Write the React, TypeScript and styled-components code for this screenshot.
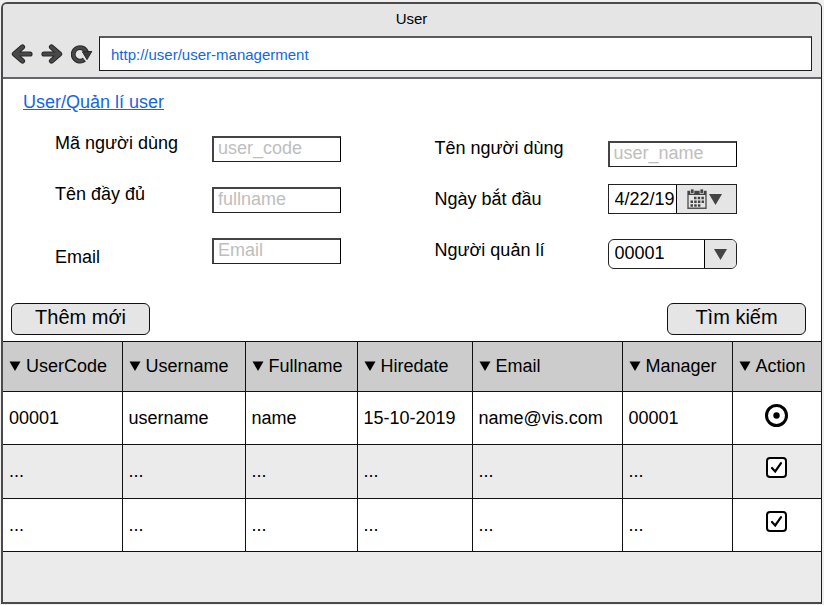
import React from "react";
import styled, { createGlobalStyle, css } from "styled-components";

const GlobalStyle = createGlobalStyle`
  *, *::before, *::after { box-sizing: border-box; }
  body {
    margin: 0;
    background: #efefef;
    color: #000;
    font-family: "Liberation Sans", Arial, sans-serif;
    font-size: 18px;
    line-height: 22px;
  }
  input, button, select { font: inherit; color: inherit; margin: 0; }
`;

const Page = styled.div`
  min-height: 100vh;
  display: flex;
  padding: 2px 2px 1px 1px;
`;

const BrowserWindow = styled.div`
  flex: 1;
  min-width: 0;
  display: flex;
  flex-direction: column;
  border: 2px solid #4a4a4c;
  border-right: 1px solid #1c1c1e;
  border-radius: 6px 6px 0 0;
  background: #ebebeb;
  overflow: hidden;
`;

const Chrome = styled.header`
  background: #e5e5e5;
  border-bottom: 2px solid #66666a;
  padding: 4px 9px 6px 8px;
`;

const Title = styled.div`
  font-size: 15px;
  text-align: center;
`;

const Toolbar = styled.div`
  display: flex;
  align-items: center;
  gap: 6px;
  margin-top: 6px;
`;

const NavGroup = styled.nav`
  display: flex;
  gap: 8px;
`;

const NavButton = styled.button`
  display: flex;
  padding: 0;
  border: 0;
  background: none;
`;

const Address = styled.input`
  flex: 1;
  min-width: 0;
  height: 35px;
  padding: 0 11px;
  border: 1px solid #1c1c1e;
  border-top: 2px solid #5a5a5c;
  outline: 0;
  background: #fff;
  color: #1267e0;
  font-size: 15px;
`;

const Content = styled.main`
  background: #fff;
`;

const Crumb = styled.a`
  display: inline-block;
  margin: 12px 0 0 20px;
  color: #1267e0;
  text-decoration: underline;
`;

const Form = styled.form`
  display: grid;
  grid-template-columns: 380fr 387fr;
  padding: 19px 0 34px 52px;
`;

const Column = styled.div<{ $lowered?: boolean }>`
  display: grid;
  grid-auto-rows: 34px;
  row-gap: 17px;
  padding-top: ${(p) => (p.$lowered ? "1px" : "0")};
`;

const Field = styled.div<{ $labelWidth: number; $align: string }>`
  display: grid;
  grid-template-columns: ${(p) => p.$labelWidth}px 129px;
  align-items: ${(p) => p.$align};
`;

const Label = styled.label<{ $place?: "start" | "center" | "end" }>`
  align-self: ${(p) => p.$place ?? "start"};
  line-height: 22px;
`;

const LoweredLabel = styled(Label)`
  padding-top: 4px;
`;

const TextInput = styled.input`
  width: 100%;
  height: 26px;
  padding: 0 4px 2px;
  border: 1px solid #222;
  border-width: 2px 1px 1px 2px;
  border-color: #444 #000 #222 #444;
  background: #fff;
  outline: 0;
  &::placeholder { color: #bebebe; opacity: 1; }
`;

const Picker = styled.div<{ $rounded?: boolean }>`
  display: flex;
  height: 30px;
  border: 1px solid #222;
  overflow: hidden;
  background: #fff;
  ${(p) =>
    p.$rounded &&
    css`
      display: grid;
      grid-template-columns: 1fr 32px;
      border-radius: 6px;
    `}
`;

const DateInput = styled.input`
  width: 67px;
  padding: 0 0 0 6px;
  border: 0;
  outline: 0;
  background: none;
`;

const DateButton = styled.button`
  flex: 1;
  display: flex;
  align-items: center;
  justify-content: center;
  gap: 2px;
  padding: 0 3px 0 0;
  border: 0;
  border-left: 1px solid #000;
  background: #e5e5e5;
`;

const Select = styled.select`
  appearance: none;
  grid-area: 1 / 1 / 2 / 3;
  width: 100%;
  padding: 0 36px 2px 6px;
  border: 0;
  outline: 0;
  background: transparent;
`;

const SelectArrow = styled.span`
  grid-area: 1 / 2;
  display: flex;
  align-items: center;
  justify-content: center;
  border-left: 1px solid #000;
  background: #e5e5e5;
  pointer-events: none;
`;

const Actions = styled.div`
  display: flex;
  justify-content: space-between;
  padding: 0 15px 6px 8px;
`;

const ActionButton = styled.button`
  width: 139px;
  height: 32px;
  padding: 0 0 4px;
  border: 1px solid #111;
  border-radius: 6px;
  background: #e5e5e5;
  font-size: 20px;
`;

const Table = styled.table`
  width: 100%;
  table-layout: fixed;
  border-collapse: collapse;
  th, td { border: 1px solid #111; text-align: left; }
  tr > :first-child { border-left-width: 0; }
  tr > :last-child { border-right-width: 0; }
`;

const Col = styled.col<{ $w: number }>`
  width: ${(p) => p.$w}px;
`;

const HeadCell = styled.th`
  height: 50px;
  padding: 0 6px 2px;
  background: #cccccc;
  font-weight: 400;
`;

const SortButton = styled.button`
  display: flex;
  align-items: center;
  gap: 5px;
  padding: 0;
  border: 0;
  background: none;
`;

const Row = styled.tr<{ $shaded?: boolean }>`
  height: ${(p) => (p.$shaded ? 54 : 53)}px;
  background: ${(p) => (p.$shaded ? "#ebebeb" : "#fff")};
`;

const Cell = styled.td`
  padding: 0 6px 1px;
`;

const ActionCell = styled.td`
  padding: 12px 0 0;
  vertical-align: top;
`;

const Toggle = styled.span`
  display: grid;
  justify-content: center;
  > * { grid-area: 1 / 1; }
  svg { pointer-events: none; place-self: center; }
`;

const Mark = styled.input<{ $round?: boolean }>`
  appearance: none;
  width: ${(p) => (p.$round ? 23 : 21)}px;
  height: ${(p) => (p.$round ? 23 : 21)}px;
  border: ${(p) => (p.$round ? 3 : 2)}px solid #000;
  border-radius: ${(p) => (p.$round ? "50%" : "4px")};
  background: #fff;
  & + svg { visibility: hidden; }
  &:checked + svg { visibility: visible; }
`;

const Triangle = ({ large }: { large?: boolean }) => (
  <svg width={large ? 13 : 12} height={large ? 11 : 10} viewBox="0 0 12 10" aria-hidden="true">
    <path d={large ? "M0 0H12L6 10Z" : "M.5 .5H11.5L6 10Z"} fill={large ? "#444" : "#000"} />
  </svg>
);

const ArrowIcon = ({ forward }: { forward?: boolean }) => (
  <svg width="22" height="20" viewBox="0 0 22 20" aria-hidden="true">
    <g
      transform={forward ? "matrix(-1 0 0 1 22 0)" : undefined}
      fill="none"
      strokeLinecap="round"
      strokeLinejoin="round"
    >
      <path d="M11.5 3L3.4 10L11.5 17M4 10H19" stroke="#2a2a2a" strokeWidth="5.2" />
      <path d="M11.5 3L3.4 10L11.5 17M4 10H19" stroke="#484848" strokeWidth="3.2" />
    </g>
  </svg>
);

const ReloadIcon = () => (
  <svg width="22" height="20" viewBox="0 0 22 20" aria-hidden="true">
    <path d="M13.4 15.6A6.8 6.8 0 1 1 15.6 8.6" fill="none" stroke="#2a2a2a" strokeWidth="4.8" />
    <path d="M13 15.9A6.8 6.8 0 1 1 15.6 8.6" fill="none" stroke="#484848" strokeWidth="2.8" />
    <path d="M11.4 7.8L20.8 7.4L16 15.6Z" fill="#3a3a3a" stroke="#2a2a2a" strokeLinejoin="round" />
  </svg>
);

const CalendarIcon = () => (
  <svg width="20" height="20" viewBox="0 0 20 20" aria-hidden="true">
    <path d="M1 2.5H19V19.3H1Z" fill="#e5e5e5" stroke="#555" strokeWidth="1.4" />
    <path d="M1 2H19V6H1Z" fill="#444" />
    <path d="M3.5 0H7V4.5H3.5ZM13 0H16.5V4.5H13Z" fill="#444" stroke="#e5e5e5" strokeWidth=".7" />
    <path d="M7 9H17M3.5 12.7H17M3.5 16.4H13.5" stroke="#444" strokeWidth="2.5" strokeDasharray="2.5 1.2" />
  </svg>
);

const CheckIcon = () => (
  <svg width="13" height="13" viewBox="0 0 13 13" aria-hidden="true">
    <path d="M2 7L5.2 10.4L11 2.2" fill="none" stroke="#000" strokeWidth="2.2" strokeLinecap="round" />
  </svg>
);

const DotIcon = () => (
  <svg width="7" height="7" viewBox="0 0 7 7" aria-hidden="true">
    <circle cx="3.5" cy="3.5" r="3.2" />
  </svg>
);

const columns = [
  { name: "UserCode", width: 119 },
  { name: "Username", width: 123 },
  { name: "Fullname", width: 112 },
  { name: "Hiredate", width: 115 },
  { name: "Email", width: 150 },
  { name: "Manager", width: 110 },
  { name: "Action", width: 89 },
];

const blank = ["...", "...", "...", "...", "...", "..."];
const rows = [["00001", "username", "name", "15-10-2019", "name@vis.com", "00001"], blank, blank];

export default function App() {
  return (
    <Page>
      <GlobalStyle />
      <BrowserWindow>
        <Chrome>
          <Title>User</Title>
          <Toolbar>
            <NavGroup>
              <NavButton type="button" aria-label="Back"><ArrowIcon /></NavButton>
              <NavButton type="button" aria-label="Forward"><ArrowIcon forward /></NavButton>
              <NavButton type="button" aria-label="Reload"><ReloadIcon /></NavButton>
            </NavGroup>
            <Address type="text" aria-label="Address" defaultValue="http://user/user-managerment" />
          </Toolbar>
        </Chrome>
        <Content>
          <Crumb href="#user">User/Quản lí user</Crumb>
          <Form id="search" onSubmit={(e) => e.preventDefault()}>
            <Column>
              <Field $labelWidth={157} $align="center">
                <Label htmlFor="code">Mã người dùng</Label>
                <TextInput id="code" placeholder="user_code" />
              </Field>
              <Field $labelWidth={157} $align="center">
                <Label htmlFor="fullname">Tên đầy đủ</Label>
                <TextInput id="fullname" placeholder="fullname" />
              </Field>
              <Field $labelWidth={157} $align="center">
                <Label htmlFor="email" $place="end">Email</Label>
                <TextInput id="email" placeholder="Email" />
              </Field>
            </Column>
            <Column $lowered>
              <Field $labelWidth={173} $align="end">
                <LoweredLabel htmlFor="name">Tên người dùng</LoweredLabel>
                <TextInput id="name" placeholder="user_name" />
              </Field>
              <Field $labelWidth={173} $align="start">
                <LoweredLabel htmlFor="start">Ngày bắt đầu</LoweredLabel>
                <Picker>
                  <DateInput id="start" type="text" defaultValue="4/22/19" />
                  <DateButton type="button" aria-label="Calendar">
                    <CalendarIcon />
                    <Triangle large />
                  </DateButton>
                </Picker>
              </Field>
              <Field $labelWidth={173} $align="end">
                <LoweredLabel htmlFor="manager">Người quản lí</LoweredLabel>
                <Picker $rounded>
                  <SelectArrow><Triangle large /></SelectArrow>
                  <Select id="manager" defaultValue="00001">
                    <option>00001</option>
                  </Select>
                </Picker>
              </Field>
            </Column>
          </Form>
          <Actions>
            <ActionButton type="button">Thêm mới</ActionButton>
            <ActionButton type="submit" form="search">Tìm kiếm</ActionButton>
          </Actions>
          <Table>
            <colgroup>
              {columns.map((c) => <Col key={c.name} $w={c.width} />)}
            </colgroup>
            <thead>
              <tr>
                {columns.map((c) => (
                  <HeadCell key={c.name} scope="col">
                    <SortButton type="button"><Triangle />{c.name}</SortButton>
                  </HeadCell>
                ))}
              </tr>
            </thead>
            <tbody>
              {rows.map((cells, i) => (
                <Row key={i} $shaded={i === 1}>
                  {cells.map((text, j) => <Cell key={j}>{text}</Cell>)}
                  <ActionCell>
                    <Toggle>
                      <Mark
                        type={i === 0 ? "radio" : "checkbox"}
                        $round={i === 0}
                        defaultChecked
                        aria-label={`Select row ${i + 1}`}
                      />
                      {i === 0 ? <DotIcon /> : <CheckIcon />}
                    </Toggle>
                  </ActionCell>
                </Row>
              ))}
            </tbody>
          </Table>
        </Content>
      </BrowserWindow>
    </Page>
  );
}
